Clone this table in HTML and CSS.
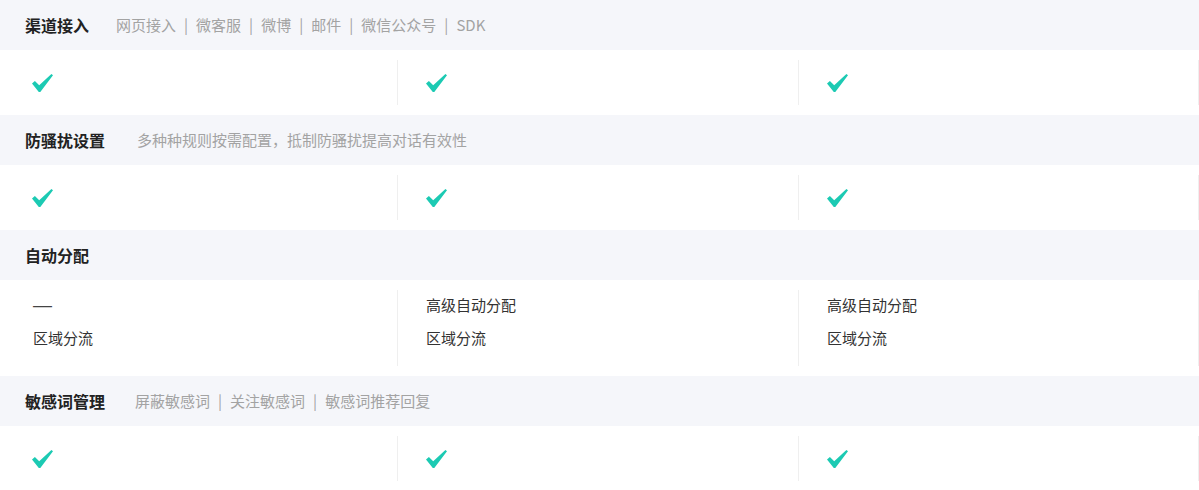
FILE: index.html
```html
<!DOCTYPE html>
<html lang="zh-CN">
<head>
<meta charset="utf-8">
<title>功能对比</title>
<link rel="stylesheet" href="styles.css">
</head>
<body>
<div class="compare">
  <section class="group">
    <div class="group-head">
      <h3 class="group-title">渠道接入</h3>
      <div class="group-desc group-desc-tight">
        <span>网页接入</span><span class="sep">|</span><span>微客服</span><span class="sep">|</span><span>微博</span><span class="sep">|</span><span>邮件</span><span class="sep">|</span><span>微信公众号</span><span class="sep">|</span><span>SDK</span>
      </div>
    </div>
    <div class="group-row">
      <div class="cell"><svg class="check" viewBox="0 0 21 18"><path d="M0 9.6 L2.9 7 L7.2 11.2 L19.4 0 L21 1.3 L8.3 18 L6.8 18 Z"/></svg></div>
      <div class="cell"><svg class="check" viewBox="0 0 21 18"><path d="M0 9.6 L2.9 7 L7.2 11.2 L19.4 0 L21 1.3 L8.3 18 L6.8 18 Z"/></svg></div>
      <div class="cell"><svg class="check" viewBox="0 0 21 18"><path d="M0 9.6 L2.9 7 L7.2 11.2 L19.4 0 L21 1.3 L8.3 18 L6.8 18 Z"/></svg></div>
    </div>
  </section>

  <section class="group">
    <div class="group-head">
      <h3 class="group-title">防骚扰设置</h3>
      <div class="group-desc group-desc-wide"><span>多种种规则按需配置，抵制防骚扰提高对话有效性</span></div>
    </div>
    <div class="group-row">
      <div class="cell"><svg class="check" viewBox="0 0 21 18"><path d="M0 9.6 L2.9 7 L7.2 11.2 L19.4 0 L21 1.3 L8.3 18 L6.8 18 Z"/></svg></div>
      <div class="cell"><svg class="check" viewBox="0 0 21 18"><path d="M0 9.6 L2.9 7 L7.2 11.2 L19.4 0 L21 1.3 L8.3 18 L6.8 18 Z"/></svg></div>
      <div class="cell"><svg class="check" viewBox="0 0 21 18"><path d="M0 9.6 L2.9 7 L7.2 11.2 L19.4 0 L21 1.3 L8.3 18 L6.8 18 Z"/></svg></div>
    </div>
  </section>

  <section class="group">
    <div class="group-head">
      <h3 class="group-title">自动分配</h3>
    </div>
    <div class="group-row">
      <div class="cell cell-list">
        <span class="line dash">—</span>
        <span class="line">区域分流</span>
      </div>
      <div class="cell cell-list">
        <span class="line">高级自动分配</span>
        <span class="line">区域分流</span>
      </div>
      <div class="cell cell-list">
        <span class="line">高级自动分配</span>
        <span class="line">区域分流</span>
      </div>
    </div>
  </section>

  <section class="group">
    <div class="group-head">
      <h3 class="group-title">敏感词管理</h3>
      <div class="group-desc">
        <span>屏蔽敏感词</span><span class="sep">|</span><span>关注敏感词</span><span class="sep">|</span><span>敏感词推荐回复</span>
      </div>
    </div>
    <div class="group-row">
      <div class="cell"><svg class="check" viewBox="0 0 21 18"><path d="M0 9.6 L2.9 7 L7.2 11.2 L19.4 0 L21 1.3 L8.3 18 L6.8 18 Z"/></svg></div>
      <div class="cell"><svg class="check" viewBox="0 0 21 18"><path d="M0 9.6 L2.9 7 L7.2 11.2 L19.4 0 L21 1.3 L8.3 18 L6.8 18 Z"/></svg></div>
      <div class="cell"><svg class="check" viewBox="0 0 21 18"><path d="M0 9.6 L2.9 7 L7.2 11.2 L19.4 0 L21 1.3 L8.3 18 L6.8 18 Z"/></svg></div>
    </div>
  </section>
</div>
</body>
</html>
```

FILE: styles.css
```css
html, body {
  margin: 0;
  padding: 0;
  background: #ffffff;
}

body {
  font-family: "Noto Sans CJK SC", "Noto Sans", sans-serif;
  color: #333333;
}

.compare {
  width: 1199px;
}

.group-head {
  height: 50px;
  display: flex;
  align-items: center;
  padding-left: 25px;
  background: #f5f6fa;
}

.group-title {
  margin: 0;
  font-size: 16px;
  font-weight: 700;
  color: #222222;
  line-height: 22px;
}

.group-desc {
  margin-left: 30px;
  font-size: 15px;
  color: #a3a3a3;
  line-height: 22px;
  display: flex;
  align-items: center;
}

.group-desc-tight {
  margin-left: 27px;
}

.group-desc-wide {
  margin-left: 32px;
}

.sep {
  margin: 0 8px;
}

.group-row {
  display: grid;
  grid-template-columns: 398px 401px 400px;
  padding: 10px 0;
}

.cell {
  height: 45px;
  border-right: 1px solid #efefef;
  padding-left: 28px;
  display: flex;
  align-items: center;
}

.cell:first-child {
  padding-left: 32px;
}

.check {
  width: 21px;
  height: 18px;
  fill: #1ccab3;
  display: block;
}

.cell-list {
  height: 76px;
  flex-direction: column;
  align-items: flex-start;
  justify-content: flex-start;
  gap: 11px;
  padding-top: 4px;
  box-sizing: border-box;
  font-size: 15px;
  color: #333333;
}

.cell-list:first-child {
  padding-left: 33px;
}

.line {
  line-height: 22px;
  display: block;
}

.dash {
  font-family: "Liberation Sans", sans-serif;
  font-size: 19px;
  color: #444444;
}
```
